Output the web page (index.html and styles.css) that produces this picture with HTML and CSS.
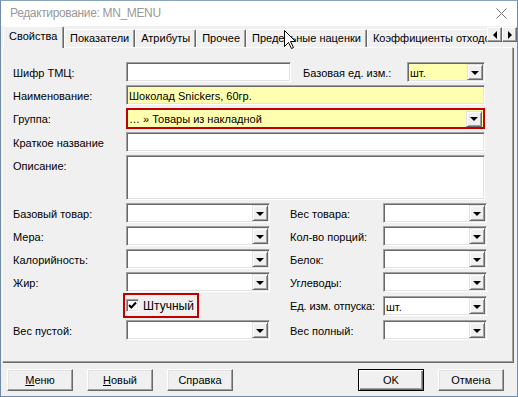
FILE: index.html
```html
<!DOCTYPE html>
<html>
<head>
    <meta charset="utf-8" />
    <title>Редактирование: MN_MENU</title>
    <link rel="stylesheet" href="styles.css">
</head>
<body>
    <div class="window">
        <div class="titlebar">
            <span class="title">Редактирование: MN_MENU</span>
            <svg class="close" width="11" height="11" viewBox="0 0 11 11"><path d="M0.5 0.5 L10.5 10.5 M10.5 0.5 L0.5 10.5" stroke="#777" stroke-width="1" fill="none"/></svg>
        </div>

        <div class="tabbar">
            <div class="tabs">
                <div class="tab active">Свойства</div>
                <div class="tab">Показатели</div>
                <div class="tab">Атрибуты</div>
                <div class="tab">Прочее</div>
                <div class="tab">Предельные наценки</div>
                <div class="tab">Коэффициенты отходов</div>
            </div>
            <div class="scroll">
                <span class="sbtn"><i class="tri-left"></i></span>
                <span class="sbtn"><i class="tri-right"></i></span>
            </div>
        </div>

        <div class="panel">
            <div class="top">
                <label>Шифр ТМЦ:</label>
                <div class="pair">
                    <div class="field w165"></div>
                    <label class="unit">Базовая ед. изм.:</label>
                    <div class="field sel yellow w78"><span class="val">шт.</span><span class="dd"><i class="tri"></i></span></div>
                </div>

                <label>Наименование:</label>
                <div class="field yellow"><span class="val">Шоколад Snickers, 60гр.</span></div>

                <label>Группа:</label>
                <div class="field sel yellow marked"><span class="val">… » Товары из накладной</span><span class="dd"><i class="tri"></i></span></div>

                <label>Краткое название</label>
                <div class="field"></div>

                <label>Описание:</label>
                <div class="field memo"></div>
            </div>

            <div class="bottom">
                <label>Базовый товар:</label>
                <div class="field sel"><span class="val"></span><span class="dd"><i class="tri"></i></span></div>
                <span></span>
                <label>Вес товара:</label>
                <div class="field sel"><span class="val"></span><span class="dd"><i class="tri"></i></span></div>

                <label>Мера:</label>
                <div class="field sel"><span class="val"></span><span class="dd"><i class="tri"></i></span></div>
                <span></span>
                <label>Кол-во порций:</label>
                <div class="field sel"><span class="val"></span><span class="dd"><i class="tri"></i></span></div>

                <label>Калорийность:</label>
                <div class="field sel"><span class="val"></span><span class="dd"><i class="tri"></i></span></div>
                <span></span>
                <label>Белок:</label>
                <div class="field sel"><span class="val"></span><span class="dd"><i class="tri"></i></span></div>

                <label>Жир:</label>
                <div class="field sel"><span class="val"></span><span class="dd"><i class="tri"></i></span></div>
                <span></span>
                <label>Углеводы:</label>
                <div class="field sel"><span class="val"></span><span class="dd"><i class="tri"></i></span></div>

                <span></span>
                <div class="checkrow">
                    <span class="check"><svg width="11" height="11" viewBox="0 0 11 11"><path d="M2 5 L4.3 7.5 L9 2.5" stroke="#000" stroke-width="2" fill="none"/></svg></span>
                    <span>Штучный</span>
                </div>
                <span></span>
                <label class="tight">Ед. изм. отпуска:</label>
                <div class="field sel nudge"><span class="val">шт.</span><span class="dd"><i class="tri"></i></span></div>

                <label>Вес пустой:</label>
                <div class="field sel"><span class="val"></span><span class="dd"><i class="tri"></i></span></div>
                <span></span>
                <label>Вес полный:</label>
                <div class="field sel"><span class="val"></span><span class="dd"><i class="tri"></i></span></div>
            </div>
        </div>

        <div class="buttons">
            <div class="group">
                <button><u>М</u>еню</button>
                <button><u>Н</u>овый</button>
                <button>Справка</button>
            </div>
            <div class="group">
                <button class="default">OK</button>
                <button>Отмена</button>
            </div>
        </div>

        <svg class="cursor" width="13" height="20" viewBox="0 0 13 20"><path d="M0.5 0.5 L0.5 16.5 L4.5 12.5 L7.5 18.5 L9.5 17.5 L6.5 11.5 L11.5 11.5 Z" fill="#fff" stroke="#000" stroke-width="1"/></svg>
    </div>
</body>
</html>
```

FILE: styles.css
```css
* {
    box-sizing: border-box;
}

body {
    margin: 0;
    font-family: "Liberation Sans", Arial, sans-serif;
    font-size: 11px;
    color: #000;
}

.window {
    position: relative;
    width: 518px;
    height: 397px;
    border: 1px solid #6d8bab;
    border-top-color: #8aa3bd;
    background: #f0f0f0;
    overflow: hidden;
}

.titlebar {
    height: 25px;
    background: #fff;
    display: flex;
    align-items: center;
    justify-content: space-between;
    padding: 0 10px 1px 9px;
}

.title {
    color: #999;
    font-size: 12px;
    letter-spacing: -0.35px;
}

.close {
    margin-right: 0;
}

/* tabs */
.tabbar {
    display: flex;
    height: 22px;
    padding-left: 2px;
}

.tabs {
    display: flex;
    align-items: flex-end;
    width: 484px;
    overflow: hidden;
}

.tab {
    flex: none;
    height: 18px;
    margin-bottom: 1px;
    padding: 0 5px;
    line-height: 17px;
    white-space: nowrap;
    border-left: 1px solid #fff;
    border-top: 1px solid #fff;
    border-right: 1px solid #696969;
    border-radius: 2px 2px 0 0;
    box-shadow: inset -1px 0 #a0a0a0;
    background: #f0f0f0;
}

.tab.active {
    height: 22px;
    margin-bottom: 0;
    padding: 0 6px 0 5px;
    line-height: 19px;
    z-index: 1;
    width: 61px;
}

.scroll {
    display: flex;
    padding-top: 1px;
}

.sbtn {
    width: 15px;
    height: 15px;
    display: flex;
    align-items: center;
    justify-content: center;
    background: #f0f0f0;
    border: 1px solid;
    border-color: #fff #696969 #696969 #fff;
    box-shadow: inset -1px -1px #a0a0a0;
}

.tri-left {
    border-top: 4px solid transparent;
    border-bottom: 4px solid transparent;
    border-right: 4px solid #000;
}

.tri-right {
    border-top: 4px solid transparent;
    border-bottom: 4px solid transparent;
    border-left: 4px solid #000;
}

/* panel */
.panel {
    margin: -1px 4px 0 1px;
    height: 315px;
    border: 1px solid;
    border-color: #fff #a0a0a0 #a0a0a0 #fff;
    box-shadow: 1px 1px 0 #696969;
    padding: 14px 0 0 10px;
}

label {
    line-height: 20px;
    padding-top: 1px;
    white-space: nowrap;
}

.top {
    display: grid;
    grid-template-columns: 113px 359px;
    grid-template-rows: 20px 20px 21px 20px 45px;
    row-gap: 3px;
}

.pair {
    display: flex;
}

.unit {
    margin-left: 12px;
    width: 104px;
}

.field {
    height: 20px;
    background: #fff;
    border: 1px solid;
    border-color: #a0a0a0 #fff #fff #a0a0a0;
    box-shadow: inset 1px 1px #696969, inset -1px -1px #e3e3e3;
    padding: 1px 1px 1px 2px;
    display: flex;
    align-items: center;
}

.w165 {
    width: 165px;
}

.w78 {
    width: 78px;
}

.memo {
    height: 45px;
}

.yellow {
    background: #ffffb0;
}

.marked {
    height: 21px;
    border: 2px solid #c00000;
    box-shadow: none;
    padding: 1px 1px 1px 1px;
}

.val {
    flex: 1;
    white-space: nowrap;
    overflow: hidden;
    padding-top: 1px;
}

.dd {
    width: 16px;
    height: 16px;
    display: flex;
    align-items: center;
    justify-content: center;
    background: #f0f0f0;
    border: 1px solid;
    border-color: #e3e3e3 #696969 #696969 #e3e3e3;
    box-shadow: inset 1px 1px #fff, inset -1px -1px #a0a0a0;
}

.tri {
    margin-top: 1px;
    border-left: 4px solid transparent;
    border-right: 4px solid transparent;
    border-top: 4px solid #000;
}

.bottom {
    margin-top: 3px;
    display: grid;
    grid-template-columns: 113px 144px 20px 93px 104px;
    grid-template-rows: 20px 20px 20px 20px 22px 20px;
    row-gap: 3px;
}

.tight {
    letter-spacing: -0.1px;
}

.nudge {
    margin-top: 1px;
}

.checkrow {
    width: 76px;
    height: 25px;
    margin: -2px 0 0 -3px;
    border: 2px solid #c00000;
    display: flex;
    align-items: center;
    gap: 4px;
    padding-left: 1px;
    font-size: 12px;
}

.check {
    width: 13px;
    height: 13px;
    background: #fff;
    border: 1px solid;
    border-color: #a0a0a0 #fff #fff #a0a0a0;
    box-shadow: inset 1px 1px #696969, inset -1px -1px #e3e3e3;
    display: flex;
    align-items: center;
    justify-content: center;
}

/* bottom buttons */
.buttons {
    display: flex;
    justify-content: space-between;
    padding: 0 13px 0 6px;
    margin-top: 7px;
}

.group {
    display: flex;
    gap: 14px;
}

button {
    width: 66px;
    height: 22px;
    font-family: "Liberation Sans", Arial, sans-serif;
    font-size: 11px;
    color: #000;
    background: #f0f0f0;
    border: 1px solid;
    border-color: #fff #696969 #696969 #fff;
    box-shadow: inset -1px -1px #a0a0a0, inset 1px 1px #e3e3e3;
    padding: 0;
}

button.default {
    border: 1px solid #000;
    box-shadow: inset 1px 1px #fff, inset -1px -1px #696969, inset -2px -2px #a0a0a0;
}

.cursor {
    position: absolute;
    left: 283px;
    top: 29px;
    z-index: 5;
}
```
